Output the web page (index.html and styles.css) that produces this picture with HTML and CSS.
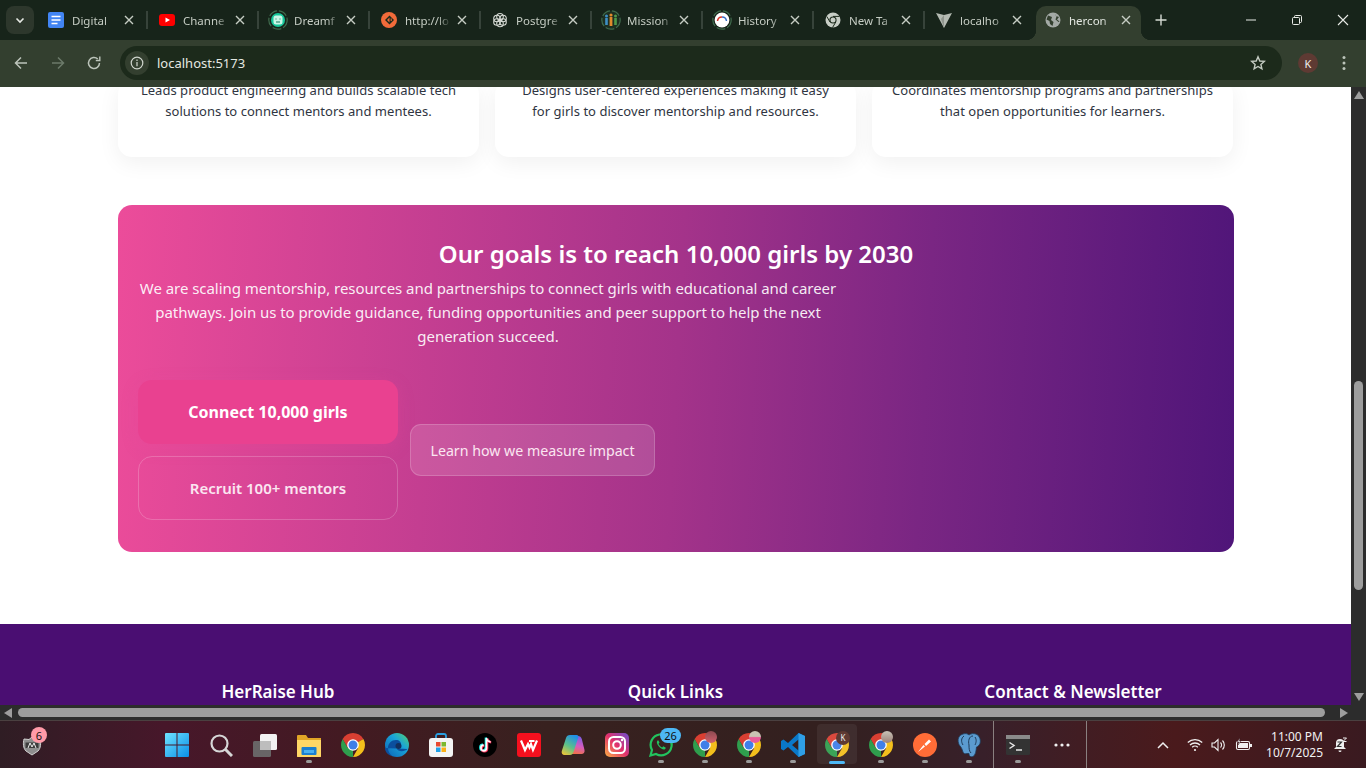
FILE: index.html
```html
<!DOCTYPE html>
<html lang="en">
<head>
  <meta charset="UTF-8">
  <title>herconnect</title>
  <link rel="stylesheet" href="styles.css">
</head>
<body>
<!-- shared icons -->
<svg class="defs" xmlns="http://www.w3.org/2000/svg">
  <defs>
    <linearGradient id="winG" x1="0" y1="0" x2="1" y2="1"><stop offset="0" stop-color="#6fe3ff"/><stop offset="1" stop-color="#0a8fe8"/></linearGradient>
    <linearGradient id="edgeG" x1="0" y1="1" x2="1" y2="0"><stop offset="0" stop-color="#0b62b8"/><stop offset=".6" stop-color="#1aa4d8"/><stop offset="1" stop-color="#54d36c"/></linearGradient>
    <linearGradient id="igG" x1="0" y1="1" x2="1" y2="0"><stop offset="0" stop-color="#fcb045"/><stop offset=".5" stop-color="#e1306c"/><stop offset="1" stop-color="#6a4fd0"/></linearGradient>
    <linearGradient id="copA" x1=".7" y1="0" x2=".2" y2="1"><stop offset="0" stop-color="#1f8fe8"/><stop offset=".55" stop-color="#5cc08a"/><stop offset="1" stop-color="#e8c53a"/></linearGradient>
    <linearGradient id="copB" x1=".6" y1="0" x2=".4" y2="1"><stop offset="0" stop-color="#7a5ce0"/><stop offset=".55" stop-color="#d45cc0"/><stop offset="1" stop-color="#f0704a"/></linearGradient>
  </defs>
  <symbol id="chrome" viewBox="0 0 24 24">
    <path fill="#d93f32" d="M12 12 22.39 6A12 12 0 0 0 1.61 6L6.8 15Z"/>
    <path fill="#f3bf1c" d="M12 12 22.39 6A12 12 0 0 1 12 24L17.2 15Z"/>
    <path fill="#2f9e4d" d="M12 12V24A12 12 0 0 1 1.61 6L6.8 15Z"/>
    <circle cx="12" cy="12" r="5.8" fill="#fff"/><circle cx="12" cy="12" r="4.5" fill="#3f7fe8"/>
  </symbol>
  <symbol id="x" viewBox="0 0 12 12"><path d="M2 2 10 10M10 2 2 10" stroke="#c6cdc4" stroke-width="1.4" fill="none"/></symbol>
</svg>

<div class="tabstrip">
  <div class="tab-menu">
    <svg width="12" height="12" viewBox="0 0 12 12"><path d="M2.5 4.5 6 8l3.5-3.5" stroke="#e6e9e4" stroke-width="1.6" fill="none"/></svg>
  </div>
  <div class="tab">
    <svg class="fav" viewBox="0 0 16 16"><rect width="16" height="16" rx="2" fill="#4285f4"/><path d="M3.5 4.5h9M3.5 8h9M3.5 11.5h6" stroke="#fff" stroke-width="1.5"/></svg>
    <span class="tab-title">Digital</span>
    <svg class="tab-x"><use href="#x"/></svg>
  </div>
  <div class="tab">
    <svg class="fav" viewBox="0 0 16 16"><rect y="2" width="16" height="12" rx="3" fill="#f00"/><path d="M6.5 5.5v5L11 8z" fill="#fff"/></svg>
    <span class="tab-title">Channe</span>
    <svg class="tab-x"><use href="#x"/></svg>
  </div>
  <div class="tab">
    <svg class="fav fav-wide" viewBox="0 0 20 20"><circle cx="10" cy="10" r="9.2" fill="none" stroke="#3f6a4c" stroke-width="1.2" stroke-dasharray="9 2"/><circle cx="10" cy="10" r="7" fill="#16c79a"/><rect x="5.5" y="5.5" width="9" height="9" rx="2.5" fill="#c9f7e6"/><path d="M8 8.5v1M12 8.5v1M8 12h4" stroke="#12795f" stroke-width="1"/></svg>
    <span class="tab-title">Dreamf</span>
    <svg class="tab-x"><use href="#x"/></svg>
  </div>
  <div class="tab">
    <svg class="fav" viewBox="0 0 16 16"><circle cx="8" cy="8" r="8" fill="#f26b3a"/><path d="M8.5 3.5 4 8l4.5 4.5L13 8z" fill="#1c2a1b"/><path d="M8.5 5.5 6 8l2.500 2.500" fill="#f26b3a"/><path d="M10.200 6.500v2.500" stroke="#f26b3a" stroke-width="1.100"/></svg>
    <span class="tab-title">http://lo</span>
    <svg class="tab-x"><use href="#x"/></svg>
  </div>
  <div class="tab">
    <svg class="fav" viewBox="0 0 16 16" fill="none" stroke="#d5d9d3" stroke-width="1.100"><circle cx="8" cy="4.800" r="3.300"/><circle cx="11" cy="6.500" r="3.300"/><circle cx="11" cy="10" r="3.300"/><circle cx="8" cy="11.500" r="3.300"/><circle cx="5" cy="10" r="3.300"/><circle cx="5" cy="6.500" r="3.300"/></svg>
    <span class="tab-title">Postgre</span>
    <svg class="tab-x"><use href="#x"/></svg>
  </div>
  <div class="tab">
    <svg class="fav fav-wide" viewBox="0 0 20 20"><circle cx="10" cy="10" r="9.200" fill="#1d2f21" stroke="#3f6a4c" stroke-width="1.200" stroke-dasharray="9 2"/><circle cx="5.500" cy="6" r="1.500" fill="#3f8fc4"/><path d="M5.500 8v7" stroke="#3f8fc4" stroke-width="2.600"/><circle cx="10" cy="5" r="1.600" fill="#e08a2c"/><path d="M10 7v9" stroke="#e08a2c" stroke-width="2.800"/><circle cx="14.500" cy="6" r="1.500" fill="#4f9a4a"/><path d="M14.500 8v7" stroke="#4f9a4a" stroke-width="2.600"/></svg>
    <span class="tab-title">Mission</span>
    <svg class="tab-x"><use href="#x"/></svg>
  </div>
  <div class="tab">
    <svg class="fav fav-wide" viewBox="0 0 20 20"><circle cx="10" cy="10" r="9.200" fill="none" stroke="#3f6a4c" stroke-width="1.200" stroke-dasharray="9 2"/><circle cx="10" cy="10" r="7.400" fill="#fff"/><path d="M5.500 11a4.500 4.500 0 0 1 4.500-4" stroke="#d9362c" stroke-width="1.500" fill="none"/><path d="M10 7a4.500 4.500 0 0 1 4.500 4" stroke="#3a6fc4" stroke-width="1.500" fill="none"/></svg>
    <span class="tab-title">History</span>
    <svg class="tab-x"><use href="#x"/></svg>
  </div>
  <div class="tab">
    <svg class="fav" viewBox="0 0 16 16"><circle cx="8" cy="8" r="7.500" fill="#c8cec6"/><circle cx="8" cy="8" r="3.600" fill="#1c2a1b"/><circle cx="8" cy="8" r="2.500" fill="#c8cec6"/><path d="M8 4.400h6.500M5 10 1.800 4.500M10.800 10 7.500 15.500" stroke="#1c2a1b" stroke-width="1"/></svg>
    <span class="tab-title">New Ta</span>
    <svg class="tab-x"><use href="#x"/></svg>
  </div>
  <div class="tab tab-last">
    <svg class="fav" viewBox="0 0 16 16"><path d="M0 1 8 3l8-2-8 15z" fill="#b4bab2"/><path d="M8 3v13L5 7z" fill="#8f958d"/></svg>
    <span class="tab-title">localho</span>
    <svg class="tab-x"><use href="#x"/></svg>
  </div>
  <div class="tab-active">
    <svg class="fav" viewBox="0 0 16 16"><circle cx="8" cy="8" r="7.500" fill="#a4aaa6"/><path d="M3 3.500 7 5 6 8 8.500 10 7.500 14 5 12 4.500 9 1.500 7.500zM10 1.500l1 2.500 3 1-2 2.500 2.500 2-1 .5-3-2.500 1-3z" fill="#333f2f"/></svg>
    <span class="tab-title">hercon</span>
    <svg class="tab-x"><use href="#x"/></svg>
  </div>
  <svg class="new-tab" viewBox="0 0 12 12"><path d="M6 .5v11M.5 6h11" stroke="#d6dbd4" stroke-width="1.400"/></svg>
  <div class="win-controls">
    <svg viewBox="0 0 12 12"><path d="M1 6h10" stroke="#e8ebe6" stroke-width="1"/></svg>
    <svg viewBox="0 0 12 12" fill="none" stroke="#e8ebe6" stroke-width="1"><rect x="1.500" y="3.500" width="7" height="7" rx="1"/><path d="M3.500 3.500v-1a1 1 0 0 1 1-1h5a1 1 0 0 1 1 1v5a1 1 0 0 1-1 1h-1"/></svg>
    <svg viewBox="0 0 12 12"><path d="M1 1 11 11M11 1 1 11" stroke="#e8ebe6" stroke-width="1.100"/></svg>
  </div>
</div>

<div class="toolbar">
  <svg class="tool" viewBox="0 0 16 16" fill="none" stroke="#bcc4ba" stroke-width="1.500"><path d="M14 8H2.500M8 2.500 2.500 8 8 13.500"/></svg>
  <svg class="tool tool-off" viewBox="0 0 16 16" fill="none" stroke="#6c7a6a" stroke-width="1.500"><path d="M2 8h11.500M8 2.500 13.500 8 8 13.500"/></svg>
  <svg class="tool" viewBox="0 0 16 16" fill="none" stroke="#bcc4ba" stroke-width="1.500"><path d="M13.500 8A5.500 5.500 0 1 1 11.800 4"/><path d="M13.800 1.500v4h-4" stroke-width="1.400"/></svg>
  <div class="omnibox">
    <div class="site-info">
      <svg viewBox="0 0 14 14" fill="none" stroke="#d0d6ce" stroke-width="1.200"><circle cx="7" cy="7" r="5.800"/><path d="M7 6v4.200M7 3.600v1.300"/></svg>
    </div>
    <span class="url">localhost:5173</span>
    <svg class="star" viewBox="0 0 16 16" fill="none" stroke="#c4cbc2" stroke-width="1.400"><path d="M8 1.800 9.800 6l4.500.4-3.400 3 1 4.400L8 11.500l-3.900 2.300 1-4.400-3.400-3L6.200 6z"/></svg>
  </div>
  <div class="avatar">K</div>
  <svg class="kebab" viewBox="0 0 4 16"><circle cx="2" cy="2.500" r="1.500" fill="#bcc4ba"/><circle cx="2" cy="8" r="1.500" fill="#bcc4ba"/><circle cx="2" cy="13.500" r="1.500" fill="#bcc4ba"/></svg>
</div>

<div class="viewport">
  <div class="page">
    <div class="cards">
      <div class="card"><p>Leads product engineering and builds scalable tech solutions to connect mentors and mentees.</p></div>
      <div class="card"><p>Designs user-centered experiences making it easy for girls to discover mentorship and resources.</p></div>
      <div class="card"><p>Coordinates mentorship programs and partnerships that open opportunities for learners.</p></div>
    </div>

    <section class="goal">
      <h2>Our goals is to reach 10,000 girls by 2030</h2>
      <p class="goal-text">We are scaling mentorship, resources and partnerships to connect girls with educational and career pathways. Join us to provide guidance, funding opportunities and peer support to help the next generation succeed.</p>
      <div class="goal-actions">
        <div class="goal-main">
          <a class="btn btn-pink">Connect 10,000 girls</a>
          <a class="btn btn-line">Recruit 100+ mentors</a>
        </div>
        <a class="btn btn-soft">Learn how we measure impact</a>
      </div>
    </section>

    <footer class="footer">
      <h3>HerRaise Hub</h3>
      <h3>Quick Links</h3>
      <h3>Contact &amp; Newsletter</h3>
    </footer>
  </div>

  <div class="vbar">
    <svg class="arrow" viewBox="0 0 10 8"><path d="M5 0 10 8H0z" fill="#9d9d9d"/></svg>
    <div class="vtrack"><div class="vthumb"></div></div>
    <svg class="arrow" viewBox="0 0 10 8"><path d="M5 8 10 0H0z" fill="#9d9d9d"/></svg>
  </div>
  <div class="hbar">
    <svg class="arrow-h" viewBox="0 0 8 10"><path d="M0 5 8 0V10z" fill="#9d9d9d"/></svg>
    <div class="hthumb"></div>
    <svg class="arrow-h" viewBox="0 0 8 10"><path d="M8 5 0 0V10z" fill="#9d9d9d"/></svg>
  </div>
  <div class="corner"></div>
</div>

<div class="taskbar">
  <div class="widget">
    <svg viewBox="0 0 20 20"><path d="M10 1 13 3.500 18 3c1 4 1 9-2 12l-6 4-6-4C1 12 1 7 2 3l5 .5z" fill="#8e8e8e" stroke="#d0d0d0" stroke-width="1"/><path d="M3.500 6.500h13v5.500h-13z" fill="#3c3c3c"/><path d="M6 12 8 7l2 4 2-4 2 5" stroke="#eee" fill="none" stroke-width="1"/></svg>
    <span class="badge badge-pink">6</span>
  </div>

  <div class="cell"><svg viewBox="0 0 24 24"><path fill="url(#winG)" d="M0 1a1 1 0 0 1 1-1h10.500v11.500H0zM12.500 0H23a1 1 0 0 1 1 1v10.500H12.500zM0 12.500h11.500V24H1a1 1 0 0 1-1-1zM12.500 12.500H24V23a1 1 0 0 1-1 1H12.500z"/></svg></div>
  <div class="cell"><svg viewBox="0 0 24 24" fill="none" stroke="#d6d6d6"><circle cx="10.500" cy="10.500" r="8" stroke-width="2.200"/><path d="M16.500 16.500 23 23" stroke-width="3"/></svg></div>
  <div class="cell"><svg viewBox="0 0 24 24"><rect x="7" y="1" width="17" height="16" rx="1.500" fill="#f2f2f2"/><rect x="0" y="8" width="18" height="16" rx="1.500" fill="#6b6b6b" fill-opacity=".92"/><rect x="7" y="8" width="11" height="9" fill="#bdbdbd"/></svg></div>
  <div class="cell dot"><svg viewBox="0 0 24 24"><path fill="#e0a526" d="M0 3a1 1 0 0 1 1-1h8l2 3h13v19H0z"/><path fill="#ffd766" d="M0 7h24v16a1 1 0 0 1-1 1H1a1 1 0 0 1-1-1z"/><rect x="4.500" y="14" width="15" height="8" rx="1" fill="#1b7fd0"/><rect x="7" y="17" width="10" height="3" fill="#49b0f0"/></svg></div>
  <div class="cell"><svg><use href="#chrome"/></svg></div>
  <div class="cell"><svg viewBox="0 0 24 24"><circle cx="12" cy="12" r="12" fill="url(#edgeG)"/><path d="M22.500 16c-2 2-6 3-9 1.500-2.500-1.200-3-4-1.500-5.500 1-1 3-1 4 0 .5-3-2-5-5-5-4.500 0-8 3.500-8 8 0 3 1.500 6 4 8-4-1-7-4-7-8" fill="#0b4f9e"/><circle cx="13.500" cy="13" r="3" fill="#12305e"/></svg></div>
  <div class="cell"><svg viewBox="0 0 24 24"><path d="M7 6V3a2 2 0 0 1 2-2h6a2 2 0 0 1 2 2v3" fill="none" stroke="#2a9fe0" stroke-width="1.800"/><rect y="5" width="24" height="19" rx="3" fill="#f4f4f4"/><rect x="7" y="9" width="4.500" height="4.500" fill="#e8492f"/><rect x="12.500" y="9" width="4.500" height="4.500" fill="#7cb82f"/><rect x="7" y="14.500" width="4.500" height="4.500" fill="#1fa0e8"/><rect x="12.500" y="14.500" width="4.500" height="4.500" fill="#fbb017"/></svg></div>
  <div class="cell"><svg viewBox="0 0 24 24"><circle cx="12" cy="12" r="12" fill="#000"/><path d="M13.500 5v10a2.800 2.800 0 1 1-2.800-2.800M13.500 5c.3 2.200 1.800 3.600 4 3.800" fill="none" stroke="#25f4ee" stroke-width="2.200" transform="translate(-.7 -.5)"/><path d="M13.500 5v10a2.800 2.800 0 1 1-2.800-2.800M13.500 5c.3 2.200 1.800 3.600 4 3.800" fill="none" stroke="#fe2c55" stroke-width="2.200" transform="translate(.7 .5)"/><path d="M13.500 5v10a2.800 2.800 0 1 1-2.800-2.800M13.500 5c.3 2.200 1.800 3.600 4 3.800" fill="none" stroke="#fff" stroke-width="1.700"/></svg></div>
  <div class="cell"><svg viewBox="0 0 24 24"><rect width="24" height="24" rx="3" fill="#f5101e"/><path d="M4 7.500 8 17l3-6 1.500 3.500 1.500-3.500L16 17l4-9.500M12 8h5.500" fill="none" stroke="#fff" stroke-width="2.200"/></svg></div>
  <div class="cell"><svg viewBox="0 0 24 24"><path fill="url(#copB)" d="M13 3h4c2 0 3.200 1 3.800 3l2.700 11c.5 2.500-1 4-3 4h-9c-2 0-2.500-1.500-2-3z"/><path fill="url(#copA)" d="M9 2h6.500c1.800 0 2.300 1.200 1.800 2.500L12.500 19c-.5 1.700-1.800 3-3.500 3H3.500C1.300 22 .2 20.300.8 18L5 5c.5-2 2-3 4-3z"/></svg></div>
  <div class="cell"><svg viewBox="0 0 24 24"><rect width="24" height="24" rx="5" fill="url(#igG)"/><rect x="4" y="4" width="16" height="16" rx="4.500" fill="none" stroke="#fff" stroke-width="2"/><circle cx="12" cy="12" r="3.800" fill="none" stroke="#fff" stroke-width="2"/><circle cx="17" cy="7" r="1.200" fill="#fff"/></svg></div>
  <div class="cell dot"><svg viewBox="0 0 24 24"><path d="M1.500 22.500 3 17A10.500 10.500 0 1 1 7 21z" fill="none" stroke="#22c35e" stroke-width="2.200"/><path d="M8.500 7.500c-1 1-1 3 1 5.500s4.500 4 6 3.500c1-.5 1.500-1.500 1-2l-2.300-1.200-1 1.200c-1.500-.5-3-2-3.700-3.700l1-1-1-2.300z" fill="#22c35e"/></svg><span class="badge badge-blue">26</span></div>
  <div class="cell dot"><svg><use href="#chrome"/></svg><span class="mini mini-pink"></span></div>
  <div class="cell dot"><svg><use href="#chrome"/></svg><span class="mini mini-photo"></span></div>
  <div class="cell dot"><svg viewBox="0 0 24 24"><path fill="#0a78c8" d="M17.500 0 24 3v18l-6.500 3L7 14l-4.500 3.500L0 16V8l2.500-1.500L7 10zM17.500 6.500 11 12l6.500 5.500z"/><path fill="#2f9fe6" d="M17.500 0 24 3v18l-6.500 3z"/></svg></div>
  <div class="cell cell-active"><svg><use href="#chrome"/></svg><span class="mini mini-k">K</span></div>
  <div class="cell dot"><svg><use href="#chrome"/></svg><span class="mini mini-grey"></span></div>
  <div class="cell dot"><svg viewBox="0 0 24 24"><circle cx="12" cy="12" r="12" fill="#ff6c37"/><path d="M5 19 12 13.500 10.500 12zM11.500 11 16 6.500l2 2-5 4.500z" fill="#fff"/></svg></div>
  <div class="cell dot"><svg viewBox="0 0 24 24"><path fill="#5b9bd0" stroke="#1e3a58" stroke-width=".8" d="M6 1c3-1 5 0 6 1 2-1.500 5-2 8-.5 3 2 4 6 3 9-1 2-2 3-3.500 3.500-.5 3-.5 8-3.500 9.500-2.500 1-4-.5-4-3H10c-1 0-3 1-4-1.500C5 16 4.500 14.500 3 13 .5 10-.5 3 6 1z"/><path d="M7 3c-3 2-3 6-1 9M16 3c-4 0-5 5-4 9 0 3 0 6 2 8M18 4c2 3 1 6 0 8" fill="none" stroke="#1e3a58" stroke-width="1"/></svg></div>
  <div class="task-line"></div>
  <div class="cell dot"><svg viewBox="0 0 24 24"><rect y="2" width="24" height="20" rx="1.500" fill="#333"/><rect y="2" width="24" height="4" fill="#8a8a8a"/><path d="M3.500 9.500 8 12.500 3.500 15.500" fill="none" stroke="#e8e8e8" stroke-width="1.500"/><path d="M10 17h6" stroke="#e8e8e8" stroke-width="1.500"/></svg></div>
  <div class="cell"><svg class="more" viewBox="0 0 16 4"><circle cx="2" cy="2" r="1.600" fill="#f0f0f0"/><circle cx="8" cy="2" r="1.600" fill="#f0f0f0"/><circle cx="14" cy="2" r="1.600" fill="#f0f0f0"/></svg></div>
  <div class="task-line"></div>

  <div class="tray">
    <svg class="tray-chev" viewBox="0 0 12 8"><path d="M1 7 6 2l5 5" fill="none" stroke="#f0f0f0" stroke-width="1.500"/></svg>
    <svg class="tray-wifi" viewBox="0 0 16 14" fill="none" stroke="#f0f0f0" stroke-width="1.300"><path d="M.8 4.500a10.500 10.500 0 0 1 14.400 0M3 7a7.300 7.300 0 0 1 10 0M5.200 9.300a4 4 0 0 1 5.600 0"/><circle cx="8" cy="12" r="1.100" fill="#f0f0f0" stroke="none"/></svg>
    <svg class="tray-vol" viewBox="0 0 16 14" fill="none" stroke="#f0f0f0" stroke-width="1.100"><path d="M1 5v4h2.500L7 12.500v-11L3.500 5z"/><path d="M9.500 4.500a3.500 3.500 0 0 1 0 5M11.500 2.500a6.500 6.500 0 0 1 0 9"/></svg>
    <svg class="tray-bat" viewBox="0 0 18 14"><rect x="1.500" y="3.500" width="13" height="8" rx="1.500" fill="none" stroke="#f0f0f0" stroke-width="1.100"/><rect x="3" y="5" width="10" height="5" fill="#f0f0f0"/><rect x="15" y="6" width="2" height="3" fill="#f0f0f0"/><path d="M5 0 2 4h2L3 7l3-4H4.500z" fill="#f0f0f0" stroke="#3a1a20" stroke-width=".5"/></svg>
    <div class="clock"><span>11:00 PM</span><span>10/7/2025</span></div>
    <svg class="tray-bell" viewBox="0 0 16 16"><path d="M8 2a4 4 0 0 1 4 4v4l2 2H2l2-2V6a4 4 0 0 1 4-4zM6.500 13.500h3a1.500 1.500 0 0 1-3 0z" fill="#f0f0f0"/><path d="M5.500 5h4l-4 4.500h4" fill="none" stroke="#333" stroke-width="1.200"/><path d="M11 1h3.500L11 4.500h3.500" fill="none" stroke="#f0f0f0" stroke-width="1"/></svg>
  </div>
</div>
</body>
</html>
```

FILE: styles.css
```css
* {
  margin: 0;
  padding: 0;
  box-sizing: border-box;
}

html, body {
  height: 768px;
  overflow: hidden;
}

body {
  display: flex;
  flex-direction: column;
  font-family: "Noto Sans", "Open Sans", sans-serif;
  background: #171f16;
}

.defs {
  display: block;
  width: 0;
  height: 0;
}

/* tab strip */
.tabstrip {
  height: 40px;
  flex: none;
  display: flex;
  align-items: flex-end;
  background: #17241a;
  color: #c6cdc4;
  font-size: 11.5px;
}

.tab-menu {
  width: 28px;
  height: 28px;
  margin: 0 3px 6px 6px;
  border-radius: 8px;
  background: #2d372c;
  display: flex;
  align-items: center;
  justify-content: center;
}

.tab {
  width: 111px;
  height: 34px;
  padding: 0 0 6px 11px;
  display: flex;
  align-items: center;
}

.tab::after {
  content: "";
  width: 2px;
  height: 18px;
  margin-left: auto;
  background: #37433a;
}

.tab-last::after {
  display: none;
}

.fav {
  width: 16px;
  height: 16px;
  flex: none;
}

.fav-wide {
  width: 20px;
  height: 20px;
  margin: 0 -2px;
}

.tab-title {
  width: 46px;
  margin-left: 8px;
  white-space: nowrap;
  -webkit-mask-image: linear-gradient(90deg, #000 72%, transparent);
  mask-image: linear-gradient(90deg, #000 72%, transparent);
}

.tab-x {
  width: 12px;
  height: 12px;
  flex: none;
  margin-left: 5px;
}

.tab-active {
  position: relative;
  width: 105px;
  height: 34px;
  padding: 0 0 6px 9px;
  display: flex;
  align-items: center;
  background: #333f2f;
  border-radius: 10px 10px 0 0;
  color: #e4e8e2;
}

.tab-active::before,
.tab-active::after {
  content: "";
  position: absolute;
  bottom: 0;
  width: 10px;
  height: 10px;
}

.tab-active::before {
  left: -10px;
  background: radial-gradient(circle at 0 0, transparent 10px, #333f2f 10.5px);
}

.tab-active::after {
  right: -10px;
  background: radial-gradient(circle at 100% 0, transparent 10px, #333f2f 10.5px);
}

.new-tab {
  width: 12px;
  height: 12px;
  margin: 0 0 14px 14px;
}

.win-controls {
  margin-left: auto;
  height: 40px;
  display: flex;
  align-items: center;
  gap: 34px;
  padding-right: 17px;
}

.win-controls svg {
  width: 12px;
  height: 12px;
}

/* toolbar */
.toolbar {
  height: 47px;
  flex: none;
  display: flex;
  align-items: center;
  padding: 0 14px 1px 13px;
  background: #333f2f;
}

.tool {
  width: 16px;
  height: 16px;
  margin-right: 21px;
}

.tool:nth-child(2) {
  margin-right: 20px;
}

.tool:nth-child(3) {
  margin-right: 18px;
}

.omnibox {
  width: 1162px;
  height: 34px;
  display: flex;
  align-items: center;
  padding: 0 16px 0 5px;
  border-radius: 17px;
  background: #1c2a1b;
}

.site-info {
  width: 24px;
  height: 24px;
  border-radius: 50%;
  background: #333f2f;
  display: flex;
  align-items: center;
  justify-content: center;
}

.site-info svg {
  width: 14px;
  height: 14px;
}

.url {
  margin-left: 8px;
  font-size: 13px;
  color: #e4e8e2;
}

.star {
  width: 16px;
  height: 16px;
  margin-left: auto;
}

.avatar {
  width: 20px;
  height: 20px;
  margin-left: 16px;
  border-radius: 50%;
  background: #5e3a33;
  color: #eee;
  font-size: 11px;
  display: flex;
  align-items: center;
  justify-content: center;
}

.kebab {
  width: 4px;
  height: 16px;
  margin-left: 24px;
}

/* page area */
.viewport {
  height: 633px;
  flex: none;
  display: grid;
  grid-template-columns: 1351px 15px;
  grid-template-rows: 618px 15px;
  background: #2c2c2c;
}

.page {
  overflow: hidden;
  background: #fff;
}

.cards {
  width: 1116px;
  margin: -7px 0 48px 118px;
  display: grid;
  grid-template-columns: repeat(3, 361px);
  gap: 16px;
}

.card {
  padding: 0 20px 35px;
  border-radius: 14px;
  background: #fff;
  box-shadow: 0 6px 22px rgba(0, 0, 0, 0.06);
  text-align: center;
  color: #2f3542;
  font-size: 13px;
  letter-spacing: 0.03px;
  line-height: 21px;
}

.goal {
  width: 1116px;
  height: 347px;
  margin: 0 0 72px 118px;
  padding: 32px 20px;
  border-radius: 14px;
  background: linear-gradient(93deg, #ec4c9a 0%, #a4338a 50%, #7a2683 72%, #4f1579 100%);
  color: #fff;
}

.goal h2 {
  font-size: 24px;
  font-weight: 600;
  line-height: 34px;
  margin-bottom: 5px;
  text-align: center;
}

.goal-text {
  width: 700px;
  font-size: 15px;
  letter-spacing: -0.05px;
  line-height: 24px;
  text-align: center;
  color: rgba(255, 255, 255, 0.92);
}

.goal-actions {
  margin-top: 32px;
  display: flex;
  align-items: center;
  gap: 12px;
}

.goal-main {
  width: 260px;
  display: flex;
  flex-direction: column;
  gap: 12px;
}

.btn {
  display: flex;
  align-items: center;
  justify-content: center;
  color: #fff;
}

.btn-pink {
  height: 64px;
  border-radius: 14px;
  background: #e94190;
  font-size: 16px;
  font-weight: 700;
  box-shadow: 0 4px 16px rgba(236, 72, 153, 0.25);
}

.btn-line {
  height: 64px;
  border-radius: 14px;
  border: 1px solid rgba(255, 255, 255, 0.2);
  font-size: 15px;
  font-weight: 600;
  color: #fbe6f1;
}

.btn-soft {
  width: 245px;
  height: 52px;
  border-radius: 11px;
  border: 1px solid rgba(255, 255, 255, 0.18);
  background: rgba(255, 255, 255, 0.13);
  font-size: 14.2px;
  color: #fbe6f1;
}

.footer {
  height: 120px;
  padding: 56px 0 0 118px;
  display: grid;
  grid-template-columns: repeat(3, 320px);
  column-gap: 77.5px;
  background: #4a0e72;
  color: #fff;
  text-align: center;
}

.footer h3 {
  font-size: 17px;
  font-weight: 600;
  line-height: 24px;
}

/* scrollbars */
.vbar {
  display: flex;
  flex-direction: column;
  align-items: center;
  padding: 4px 0;
}

.arrow {
  width: 10px;
  height: 8px;
  flex: none;
}

.vtrack {
  flex: 1;
}

.vthumb {
  width: 9px;
  height: 209px;
  margin-top: 282px;
  border-radius: 5px;
  background: #9d9d9d;
}

.hbar {
  display: flex;
  align-items: center;
  padding: 0 4px;
}

.arrow-h {
  width: 8px;
  height: 10px;
  flex: none;
}

.arrow-h:last-child {
  margin-left: auto;
  margin-right: -1px;
}

.hthumb {
  width: 1307px;
  height: 9px;
  margin-left: 6px;
  border-radius: 5px;
  background: #9d9d9d;
}

/* taskbar */
.taskbar {
  height: 48px;
  flex: none;
  display: flex;
  align-items: center;
  border-top: 1px solid #4a4040;
  background: linear-gradient(90deg, #2f1d24 0%, #47172a 12%, #431a22 25%, #38211f 40%, #33201f 60%, #38202a 72%, #4a1a1c 86%, #3a1a20 100%);
}

.widget {
  position: relative;
  width: 155px;
  height: 47px;
  display: flex;
  align-items: center;
  padding-left: 22px;
}

.widget svg {
  width: 20px;
  height: 20px;
  margin-top: 2px;
}

.badge {
  position: absolute;
  display: flex;
  align-items: center;
  justify-content: center;
  color: #111;
  font-size: 11px;
}

.badge-pink {
  left: 31px;
  top: 6px;
  width: 16px;
  height: 16px;
  border-radius: 50%;
  background: #ff9aa8;
}

.badge-blue {
  left: 21px;
  top: 7px;
  width: 21px;
  height: 15px;
  border-radius: 8px;
  background: #4db8f5;
}

.cell {
  position: relative;
  width: 44px;
  height: 47px;
  flex: none;
  display: flex;
  align-items: center;
  justify-content: center;
}

.cell > svg {
  width: 24px;
  height: 24px;
}

.cell > svg.more {
  width: 16px;
  height: 4px;
}

.cell.dot::after {
  content: "";
  position: absolute;
  left: 19px;
  bottom: 5px;
  width: 6px;
  height: 3px;
  border-radius: 2px;
  background: #9a9a9a;
}

.cell-active::before {
  content: "";
  position: absolute;
  left: 2px;
  top: 3px;
  width: 40px;
  height: 40px;
  border-radius: 4px;
  background: rgba(255, 255, 255, 0.06);
}

.cell-active::after {
  content: "";
  position: absolute;
  left: 14px;
  bottom: 4px;
  width: 16px;
  height: 3px;
  border-radius: 2px;
  background: #4db8f5;
}

.mini {
  position: absolute;
  left: 22px;
  top: 10px;
  width: 12px;
  height: 12px;
  border-radius: 50%;
}

.mini-pink {
  background: linear-gradient(#8c4a50, #d0606c);
}

.mini-photo {
  background: linear-gradient(#c9c4b4 45%, #e85a98 55%);
}

.mini-grey {
  background: linear-gradient(#c8c4b8, #9c8078);
}

.mini-k {
  left: 21px;
  width: 14px;
  height: 14px;
  background: #5e3a33;
  color: #eee;
  font-size: 8px;
  line-height: 14px;
  text-align: center;
}

.task-line {
  width: 1px;
  height: 47px;
  flex: none;
  margin: 0 2px;
  background: #8a8080;
}

.tray {
  flex: 1;
  display: flex;
  align-items: center;
  color: #f2f2f2;
}

.tray-chev {
  width: 12px;
  height: 8px;
  margin-left: 68px;
}

.tray-wifi {
  width: 16px;
  height: 14px;
  margin-left: 18px;
}

.tray-vol {
  width: 16px;
  height: 14px;
  margin-left: 8px;
}

.tray-bat {
  width: 18px;
  height: 14px;
  margin-left: 8px;
}

.clock {
  width: 70px;
  display: flex;
  flex-direction: column;
  align-items: flex-end;
  font-size: 12px;
  line-height: 16px;
}

.tray-bell {
  width: 16px;
  height: 16px;
  margin-left: 9px;
}
```
